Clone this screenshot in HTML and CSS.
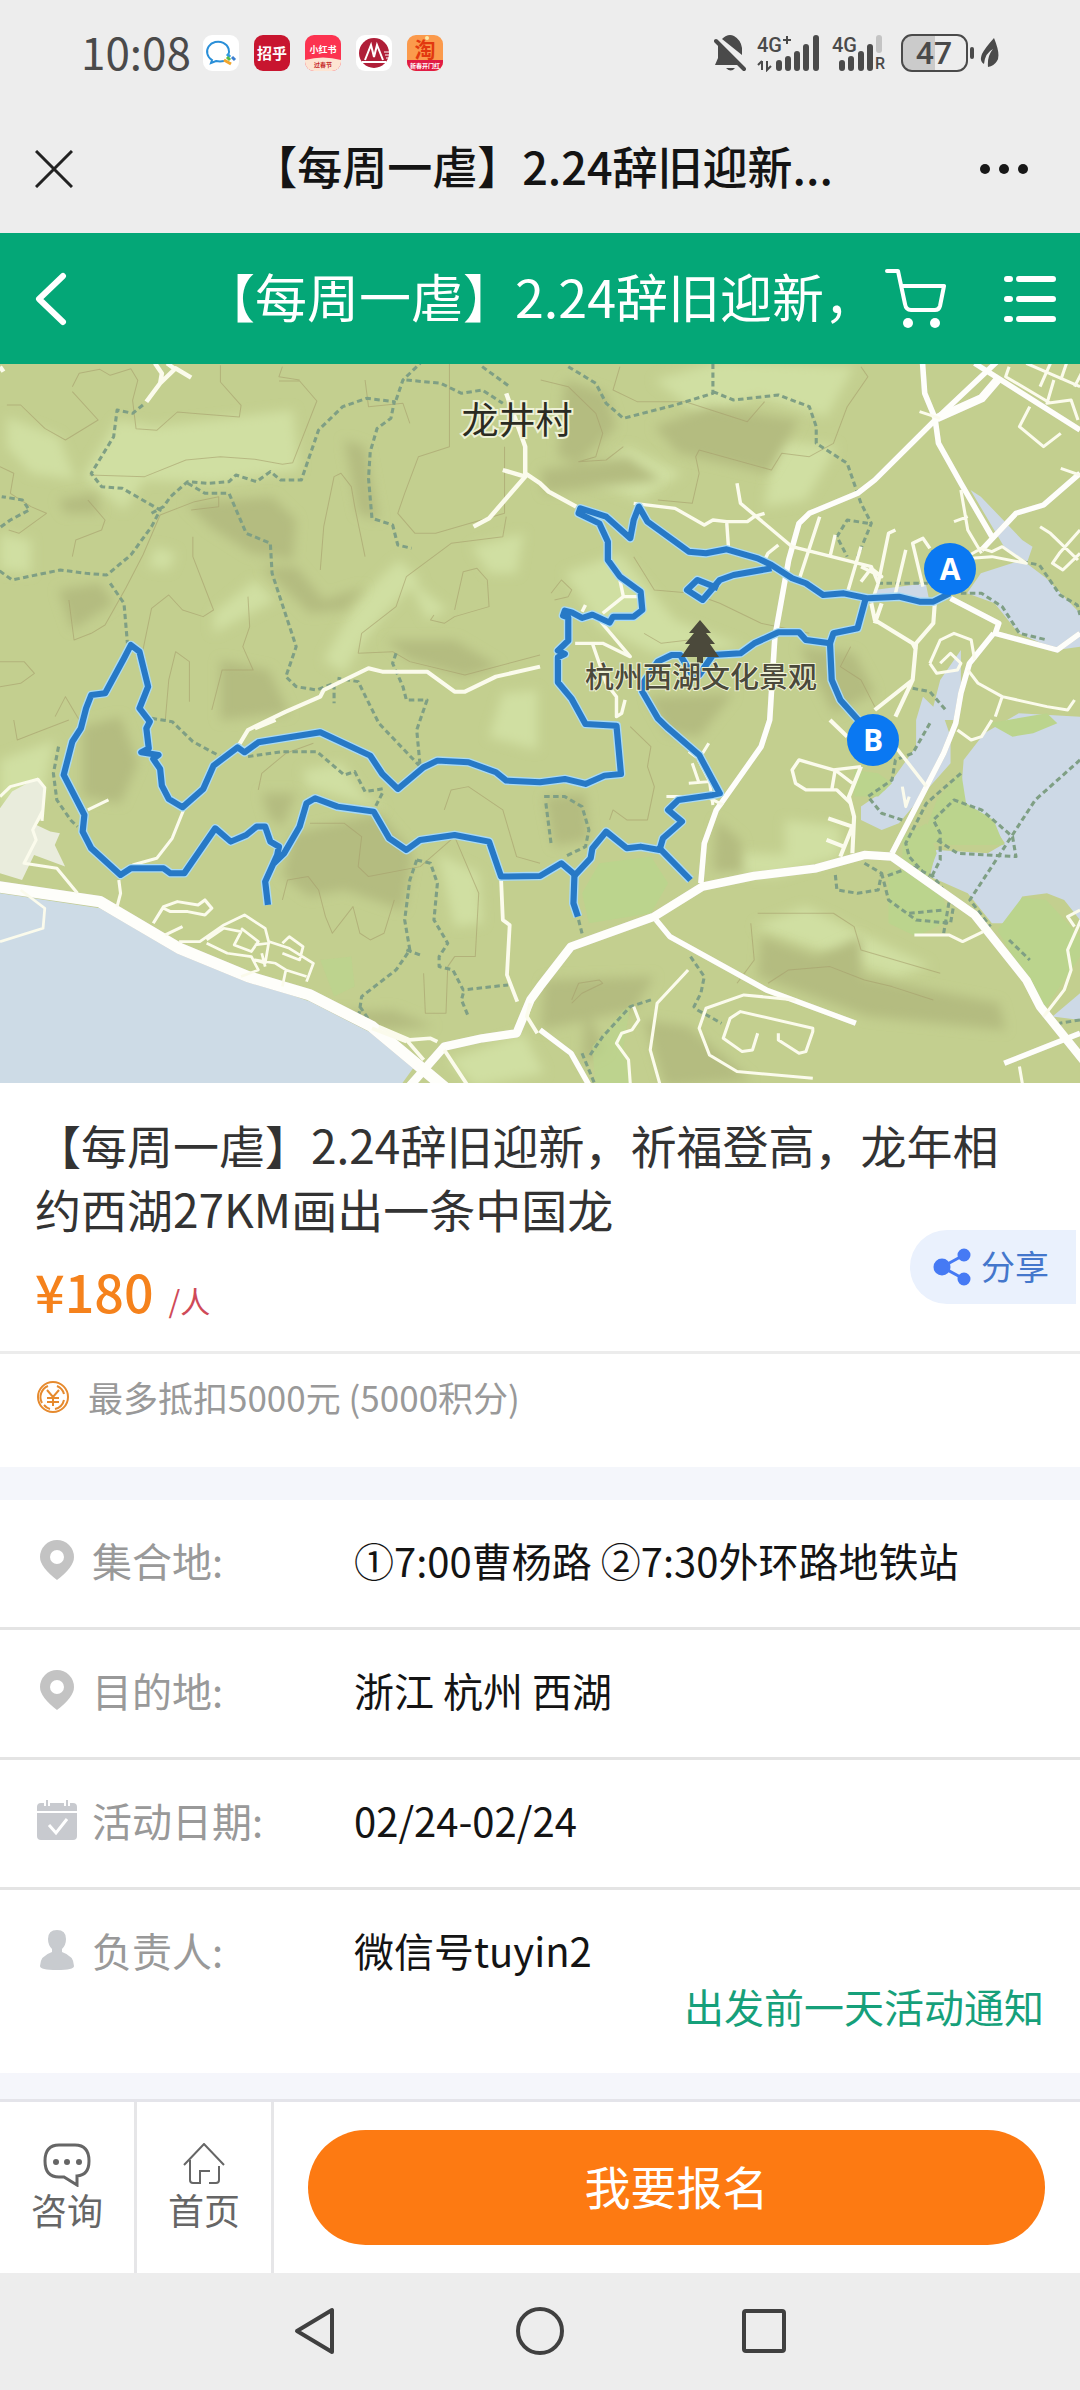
FILE: index.html
```html
<!DOCTYPE html>
<html lang="zh-CN">
<head>
  <meta charset="UTF-8">
  <meta name="viewport" content="width=device-width, initial-scale=1">
  <title>【每周一虐】2.24辞旧迎新</title>
  <link rel="stylesheet" href="styles.css">
</head>
<body>

  <div class="status-bar">
    <span class="clock">10:08</span>
    <div class="apps">
      <svg width="36" height="36" viewBox="0 0 36 36">
        <rect width="36" height="36" rx="9" fill="#fff"/>
        <path d="M25 21A11 10 0 1 0 9 25l-1 3 5-2a14 11 0 0 0 8 0" fill="none" stroke="#2a8fd8" stroke-width="2"/>
        <path d="M24 19l3 3" stroke="#2f9be0" stroke-width="3"/>
        <path d="M29 22l3 3" stroke="#3b7fd0" stroke-width="3"/>
        <path d="M27 25l-3-3" stroke="#58b947" stroke-width="3"/>
        <path d="M21 25l7 4" stroke="#f2a52b" stroke-width="3"/>
      </svg>
      <svg width="36" height="36" viewBox="0 0 36 36">
        <rect width="36" height="36" rx="9" fill="#c8152f"/>
        <text class="app-text" x="18" y="24" font-size="15" fill="#fff">招乎</text>
      </svg>
      <svg width="36" height="36" viewBox="0 0 36 36">
        <rect width="36" height="36" rx="9" fill="#fc3350"/>
        <path d="M0 25q18-5 36 0v2a9 9 0 0 1-9 9H9a9 9 0 0 1-9-9z" fill="#fde4d2"/>
        <text class="app-text" x="18" y="18" font-size="9" fill="#fff">小红书</text>
        <text class="app-text" x="18" y="32" font-size="6" fill="#c62a2a">过春节</text>
      </svg>
      <svg width="36" height="36" viewBox="0 0 36 36">
        <rect width="36" height="36" rx="9" fill="#fff"/>
        <circle cx="18" cy="18" r="15" fill="#b01e38"/>
        <path d="M9 25l6-15 3 12 3-12 6 15M6 27h24" fill="none" stroke="#fff" stroke-width="2"/>
        <path d="M28 17h6M29 20h5M30 23h3" stroke="#fff" stroke-width="1"/>
      </svg>
      <svg width="36" height="36" viewBox="0 0 36 36">
        <rect width="36" height="36" rx="9" fill="#fb9a4c"/>
        <path d="M0 25h36v2a9 9 0 0 1-9 9H9a9 9 0 0 1-9-9z" fill="#e11b44"/>
        <circle cx="20" cy="3" r="2" fill="#fde9a8"/>
        <text class="app-text" x="18" y="22" font-size="21" fill="#e2380f">淘</text>
        <text class="app-text" x="18" y="33" font-size="6" fill="#fff">新春开门红</text>
      </svg>
    </div>
    <div class="signals">
      <svg width="32" height="38" viewBox="0 0 32 38" fill="#4a4a4a">
        <path d="M8 5Q14-1 20 2q7 4 8 12v7zM4 9l22 22H1l3-7zM12 34h9q-4 5-9 0z"/>
        <path d="M2 7l28 28" stroke="#4a4a4a" stroke-width="4" stroke-linecap="round"/>
      </svg>
      <svg width="64" height="38" viewBox="0 0 64 38">
        <text class="signal-text" x="0" y="18" font-size="20">4G</text>
        <path d="M30 2v8M26 6h8M5 27v9M1 31l4-4M10 27v9l4-4" fill="none" stroke="#4a4a4a" stroke-width="2"/>
        <path d="M22 29v5M31 25v9M40 20v14M49 13v21M59 4v30" stroke="#4a4a4a" stroke-width="6" stroke-linecap="round"/>
      </svg>
      <svg width="58" height="38" viewBox="0 0 58 38">
        <text class="signal-text" x="0" y="18" font-size="20">4G</text>
        <path d="M10 29v5M19 25v9M29 20v14M38 13v21" stroke="#4a4a4a" stroke-width="6" stroke-linecap="round"/>
        <path d="M47 4v12" stroke="#c4c4c4" stroke-width="6" stroke-linecap="round"/>
        <text class="signal-text" x="43" y="35" font-size="16">R</text>
      </svg>
      <svg width="76" height="38" viewBox="0 0 76 38">
        <path d="M10 2h24v34H10a8 8 0 0 1-8-8V10a8 8 0 0 1 8-8z" fill="#cbcbcb"/>
        <rect x="1" y="1" width="65" height="36" rx="10" fill="none" stroke="#4a4a4a" stroke-width="2"/>
        <path d="M71 15v8" stroke="#4a4a4a" stroke-width="4" stroke-linecap="round"/>
        <text class="signal-text" x="33" y="30" font-size="32" text-anchor="middle">47</text>
      </svg>
      <svg width="20" height="32" viewBox="0 0 20 32" fill="#4a4a4a">
        <path d="M14 1q7 17 3 23-3 5-9 6Q7 19 13 12 5 16 4 27-1 24 2 17 5 11 14 1z"/>
      </svg>
    </div>
  </div>

  <div class="window-bar">
    <button class="icon-btn" aria-label="关闭">
      <svg width="38" height="38" viewBox="0 0 38 38" stroke="#222" stroke-width="3"><path d="M1 1l36 36M37 1L1 37"/></svg>
    </button>
    <div class="window-title">【每周一虐】2.24辞旧迎新...</div>
    <button class="icon-btn" aria-label="更多">
      <svg width="48" height="12" viewBox="0 0 48 12" fill="#181818"><circle cx="5" cy="6" r="5"/><circle cx="24" cy="6" r="5"/><circle cx="43" cy="6" r="5"/></svg>
    </button>
  </div>

  <header class="page-header">
    <button class="icon-btn back" aria-label="返回">
      <svg width="32" height="54" viewBox="0 0 32 54" fill="none" stroke="#fff" stroke-width="6" stroke-linecap="round" stroke-linejoin="round"><path d="M28 4L4 27l24 23"/></svg>
    </button>
    <div class="page-title">【每周一虐】2.24辞旧迎新，</div>
    <button class="icon-btn cart" aria-label="购物车">
      <svg width="62" height="62" viewBox="0 0 62 62" fill="none" stroke="#fff" stroke-width="4" stroke-linecap="round" stroke-linejoin="round">
        <path d="M3 3h11l7 33q1 6 6 6h24q4 0 5-4l4-20H18"/>
        <circle cx="24" cy="55" r="5" fill="#fff" stroke="none"/><circle cx="51" cy="55" r="5" fill="#fff" stroke="none"/>
      </svg>
    </button>
    <button class="icon-btn" aria-label="菜单">
      <svg width="52" height="48" viewBox="0 0 52 48" stroke="#fff" stroke-width="6" stroke-linecap="round"><path d="M3 4h3M15 4h34M3 24h3M15 24h34M3 44h3M15 44h34"/></svg>
    </button>
  </header>

  <svg class="map" viewBox="0 0 1080 719" role="img" aria-label="徒步路线图">
    <defs>
      <filter id="soft" x="-10%" y="-10%" width="120%" height="120%"><feGaussianBlur stdDeviation="16"/></filter>
      <g id="track">
        <path d="M2758 700l-48 25-40 0-60-15-90 5-70-15-60 5-50-35-40-15-60-40-40-20-90-27-60 12-50-5-60-45-60-45-25-45-15 40-10 55-70-65-75-25-5 15 60 30 25 55 0 55 35 50 60 45 5 55-25 20-60 0-10 18-50-24-30 10-30-17-20-5-5 15 15 5 0 70-30 30 20 10-20 10 0 75 40 50 40 75 90 5 13 145-48 5-55 25-60-15-72 10-98-5-30-25-80-30-90-5-40 20-75 65-45-45-35-55-145-70-180 30-40 30-20-15-70 55-30 70-60 55-40-25-20-40-5-50-20-30 15-12-50-8 22-12-7-60 10-20-30-40 25-65-25-105-25-20-20 40-55 105-40 5-15 40-15 60-25 40-25 100 60 120-5 50 25 50 85 80 30-20 95 0 20 15 40 0 30-45 60-90 45 40 45-20 30-25 25 0 15 45 25 15-5 25-35 80 8 70"/>
        <path d="M795 1510l30-30 45-80 20-70 25-15 65 25 105 15 45 80 50 35 40-30 100-15 100 20 35 105 113-2 62-38 40 35 45-50 5-30 40-50 60 50 40-5 55 10 10-35 55-50-40-35 30-30 100-15 20-5-60-115-90-80-30-30-45-80 5-30 40-60 40-20 25 0 35 60 20 0 40-60 80-5 40-30 70-33 60 0 20 23 70 10 10-30 70-15 25-95"/>
        <path d="M1668 1545l-3 85 13 40M1915 1465l90 95M2410 850l5 110 25 60 65 75M2240 625l-110 20-40 15-50 60-45-30 30-30 60 25"/>
      </g>
      <g id="roads">
        <path class="w3" d="M-20 1578l310 47 90 55 140 85 200 85 180 55 180 95 220 190"/>
        <path class="w2" d="M1180 2190l110-130 110-25 100-15 40-100 28-40 90-120 242-90 140-90 150-32 180-23 140-40 80 5 240 175 150 195 40 80 156 200M2720 175l130-60 50-60"/>
        <path class="w1" d="M2678 0l7 100 30 75 10 75 65 120 90 160M2900 0l-180 175-180 185-50 40-140 60-30 30-30 110-40 230-15 250-25 80-130 190-35 100-10 120M2850 570l100-110 80-25 106-95M2830 10l306 200M2760 715l140 75-10 30 180 50 66-50M2885 820l-70 90-25 90-15 90-35 90-150 300M1568 2010l90 70 60 110M1905 1680l40 50 280 160 260 100M3136 2020l-220 90"/>
      </g>
    </defs>
    <rect width="1080" height="719" fill="#c3cf8f"/>
    <g transform="translate(0 -4) scale(.3444 .3333)" fill="none" stroke-linejoin="round">
      <!-- hills -->
      <g filter="url(#soft)" fill="#d0dfa2">
        <path d="M340 180l110 20 400-50 20 180-250 40-200-10-60 90-120-100z"/>
        <path d="M20 170l150 60 50 130-130-20-70-80zM0 520l90 20 0 100-90-10zM620 760l120-100 60 60-180 100z"/>
        <path d="M940 900q100-200 220-300l60 60q-140 120-220 280zM1370 560l150-40-20 120-80 0zM1180 650l120 100-60 30z"/>
        <path d="M880 1230l110-20 60 90 70 50-230-70zM1270 1480l120 60 10 150-80 10zM450 560l60 20-20 50-60-10z"/>
        <path d="M1900 60l200-60 380 20-80 150-200-60-160 60zM1640 640l160-60 160 200 200 80-260 20-160-80z"/>
        <path d="M2250 240l180 20-90 160-120 20zM1820 260l160 80-120 80-160-60zM2190 1700l150-60 360 180-100 30-380-140zM2060 1540l100-60 280 10-190 60z"/>
        <path d="M2280 1380l160 20 0 90-160 0zM0 1200l160-60-40 180-120 30zM1460 1000l100-10 0 180-140-40zM1300 2100l220-80 60 120-200 40z"/>
      </g>
      <g filter="url(#soft)" fill="#b4bc80">
        <path d="M540 430l250-20 70 70-10 120-120-20-120-80zM1000 240l60 20 40 220-60-20zM760 620l100 0 80 100 120-40-60 70-100 10z"/>
        <path d="M640 900l140 30 60 130-200 20zM240 1100l110-30 50 140-50 120-110-20z"/>
        <path d="M850 1420l250-60 100 120-30 170-170-60-100 20-80-60zM760 1300l100 0-40 100-40-30z"/>
        <path d="M170 420l110-20 10 60-100 0zM170 690l120-20 40 60-120 80z"/>
        <path d="M1640 60l120 40 30 100-110 110-60-20zM1900 200l160-60 260 40-90 160-260-60zM1570 330l250-40 100 70-340 40z"/>
        <path d="M1880 1010l250-10-100 130-90-10zM1580 1310l120-10 10 140-100 20zM2080 1380l70 60 10 100-90 0z"/>
        <path d="M2210 1730l160 60 130-60 0 120 400 80 20 80-400-40-320-120zM1580 1860l320-10-60 100-270 60z"/>
        <path d="M2320 860l160 20 60 120-120 60zM940 1960l200-10 120 50-150 10zM1700 1950l60 120-70 40z"/>
        <path d="M2000 2000l180 160-250 20-60-200zM1120 840l200 0 130 80-100 30-160-50z"/>
      </g>
      <!-- contours -->
      <g stroke="#a79f6d" stroke-width="3" opacity=".6">
        <path d="M210 80l20-40 60-12 30 18 60-20 20 35-15 60 10 85 60 5 60-55 60 5 120 10 5-35-60-70 0-50M20 135l40 0 70 70 60 35 95-60-75-85"/>
        <path d="M260 345l160 5 120-50 100-10 100 8 80 15 30-5 70-185-50-60-60 0M820 20l-10 30 60 10M0 320l40 20-10 60 60 40 45 20-80 60-30-10"/>
        <path d="M210 590l10-50 75-30 10-30-50-60M200 720l15 120 50-20 40-25 60-110 50-100 50-120 100-40 70-15 0 30-80 10"/>
        <path d="M560 530l0 60 60 160-30 20-60-20-40-45-50 40-30 150M720 710l5 90-20 60 30 70-90 0-30 120M480 1080l10-120 20-85 40 30 0 120"/>
        <path d="M930 630l10-130 30-150 20-10 30 40 10 60 30 150M1060 60l10 80 100-10 20 60M1305 10l0 250-90 30-40 110-20 60 50 60 60 0 200-60 0-200M1320 750l25-115 40-10 30 35 5 80-100 30-30 20-40-10 10-15M1040 880l10-60 100-80 30-90 130-100 150-20 10-60M1040 880l100-5 50 30 160 40 218-60"/>
        <path d="M1800 20l-20 70 70 35 140 0 180 60 50-60M2500 20l20 30-60 90-40 110-70 40-80-10-30 50-210-60-10 20 10 50-20 90-100-10M1570 60l80 20 80 80 20 60-20 70-50 15 80-5 50-40"/>
        <path d="M1840 590l60 100 110 10 80 30 120 60 140 30M2470 860l-30 60 60 40 40 80M1600 700l30-40 30 30-10 20-40 10M1870 820l50 30 80-10"/>
        <path d="M750 1290l10-50 70-60 80-30M900 1390l100 0 50 40-10 90 30 30 150-30 100-90 70 170-10 190-60 0-20 30-5 140-60 0-5-120M820 1620l15-60 60-10 30 40 20 80 20 50 60-80 20 80 30 20 40-20 30-100"/>
        <path d="M1290 1350l20-60 50-10 100 70 40 140 68 20M1830 1100l60 60-10 60 20 60-20 100-60 0-40-30-10 30M2200 1660l220 0 60 40 20 70 230 70M2180 1690l10 110-50 70M2230 1870l60-40 120-10 100 40 80 20 120 40M1660 1920l20-50 60-10 10 10-60 30-30 30"/>
        <path d="M0 980l60-10 40-30-30-35-70 0M40 1080l10 60 50-20 100-40M230 1080l-40-70-30 60"/>
      </g>
      <!-- water and parks -->
      <path d="M0 1345l35-50 75-42 22 32-8 85-18 25 40 20 28 5-15 35 30 65-90-35-35 75-64-20z" fill="#e9ecdc"/>
      <path d="M0 1600l290 45 230 130 200 85 180 65 180 95 130 90-70 100H0z" fill="#cddbe6"/>
      <g fill="#cdd9e6">
        <path d="M2848 640l120-40 70 55 98 105v100l-68 10-110-50-70-90-80-30zM2538 690l150-20 10 50-160 0zM2818 390l30 20 120 130 30 20-15 45-65-40z"/>
        <path d="M2798 1200l60-80 100-60 178 10v610l-46-60-50-20-72 10-38 80-50 0-70-90-110-50 18-80 150 10 50-30-40-60-90-60zM2500 1340l70-50 90-130 0-80 20-70 60 60 20 60 0 80-60 70-90 110-50 20-60-30zM3136 1900l-80 70 80 10zM2700 1080l30-120 60-90 0 130-10 80z"/>
      </g>
      <g fill="#bbd48d">
        <path d="M2968 1612l70 8 98 110v60l-110 170-40-90-90-160zM2720 1320l70-90 15 100 80 50 30 75-150 0-90-10zM2480 1230l70 10 40 30-40 40-70 0zM1740 1510l150-20 50 80-50 90-180 30-20-90zM2580 1530l60 0 90 60 30 90-100 50-80-40zM2620 1430l70-40 30 90-30 80-70-60zM2870 1090l70 40 60-10 70-30-30-30z"/>
        <path d="M1720 2060l90-110 20-10-20 120 30 130-110 0zM930 1800l90-10 10 90-60 30z" opacity=".7"/>
      </g>
      <!-- footpaths -->
      <g stroke="#7f9f84" stroke-width="9" stroke-dasharray="16 10">
        <path d="M415 135l-30 25-45-10-10 80-65 110 30 40 60 5 110 65-25 50-60 85-70 60-60-5-75-10-140 30-40-30-5-120 40-30 55-30-20-30-60-10"/>
        <path d="M440 460l35-20 20-30 50-45 60 5 60-5 20-20 60 20 40-30 30 25 60 0 50-150 70-70 70-25 80 10-10 50-40 30-20 70-5 80 10 120 60 20 15 60 40 10"/>
        <path d="M545 370l50 30 70 0 50 120 70 30 5 90 70 220-30 90 30 30 60 10 50-20 0 60M320 670l40 60 10 120M1150 120l20-60 50-50M1180 60l100 10 60 30 60-10 60 40M1400 20l40 30 40 30M440 1075l60 10 60 60 90 50M1150 880l-10 30 30 70 10 40 60 0-30 90 10 110-120-130-60-125-60-10"/>
        <path d="M1650 20l80 50 30 60 50 45 150-40 110-35 0-90M2070 95l60 25 130-15 90 35 20 60 0 50 90 60 40 120 30 60-40 100M2520 490l-60-10-30 50 30 60M2548 670l160 0M2790 700l60 0 60 40 50 80 80 20M2968 605l50 10 60 90 50 30 8 30M2650 985l50 10 50 60"/>
        <path d="M170 1160l-15 80 10 80 40 60 20 20M720 1190l100-15 100 0 80 70 30-10 30 60 60-10M1110 1300l-20 40M1210 1500l40 10 20 60-10 110 40 70-25 40 0 30 40 10 30 60 130-15M1345 1900l-5 20 20 50M1210 1500l-20 60-15 120 15 90-40 60-100 80-10 70M1180 1770l40 15M1045 1940l40 60"/>
        <path d="M1580 1310l60 0 50 30 20 70-10 50-60 30M1585 1330l15 120M1680 1680l10 40M2005 1790l40 60-10 50-20 40 10 10 70 40M1890 1920l-60 20-80 90-40 60M1690 2080l40 100"/>
        <path d="M3136 1200l-130 120-120 190-70 110 60 80M2700 1090l-50 90-50 20-10 60-70 50 40 50 60 20M2790 1240l-100 90-60 120 10 40 60 70 30-60 0-80-20-40 60-60 80 30 90 80 10 60-170-10-60-40M2510 1510l50 30-10 50-60 10-60-10-5-50M2560 1540l20 80 80 60 100 10 10-60-60-80-60-30-80 30M2740 1720l20-120M2640 1660l100-10M2930 1740l60 60M3136 1980l-60 10"/>
      </g>
      <!-- main roads, casing under the white line -->
      <use href="#roads" class="road-casing"/>
      <use href="#roads" class="road"/>
      <g stroke="#fbfbec" stroke-width="9">
        <path d="M450 10l20 30-5 30-40 55M465 70l45-45 45 28M505 25l-20-15M0 20l10 15M1470 100l55 160 0 80 43 30 25 25 80 45M1460 330l65 20-105 125-45 25" stroke-width="13"/>
        <path d="M1568 920l-128 30-90 45-30 0-80-60-130 0-40-10-130 65-10 20-100 45-110 55-35 60M800 1080l-60 25" stroke-width="12"/>
        <path d="M1840 430l120 15 85 50 25-15 40 5 5 75M2110 485l60 0 20-15 30-10M2140 370l10 60 150 130 230 60 20 50-20 60M2220 600l10-20 30-25M2380 470l-60 190M2410 590l15-65M2500 560l-40 140M2600 510l-20 10-30 150M2630 570l-30 130M2680 680l-30-130 30-15 20 30M2500 620l60 30-30-25-30 40" stroke-width="10"/>
        <path d="M1800 660l10 50 50 0M1810 710l-60 50M1740 780l90 110-80-40-30 0 40 120 30 40 0 60 15-10 10-40M1750 850l-80 0M1700 735l-10 20" stroke-width="10"/>
        <path d="M2530 730l10 50 110 70 10 20M2540 790l20-60M2715 720l-5 70-50 60-10 110-110 90M2650 960l-50 110M2410 1080l50 50M2500 1220l-35 90 15 60-5 110M2440 1490l35-90-70-25M2400 1440l50 20" stroke-width="12"/>
        <path d="M2500 1220l-80 10-100-30-20 30 10 40 30 20 90 0 40 40M2425 1230l-10 60M2425 1230l50 40M2600 1160l90 120" stroke-width="10"/>
        <path d="M2700 910l30-70 40-20 50 20 10 60M2700 910l20 30 60-10 10-20-30-30-30 30M2810 930l30 40 70 40-20 60M2910 1010l130 30 60 10 20-30M2780 1110l40 30 30-10 30-50M2640 1310l-10 30-10-60" stroke-width="9"/>
        <path d="M2790 390l20 120 40 70M2770 485l40-15M2790 600l60-35 30 10 30-15 70 50-100-20-60 5M3020 500l30 20 80 80M3136 510l-60 70-20 30 30 20 50-50M3080 325l56 20M2930 20l-10 30 130 80M2980 10l156 70M2990 140l-30 60 70 60 50-40M3020 80l30-70M3080 60l20-60M3120 80l20-40M3060 60l-20 70 70-10 20 60M2670 155l60 20" stroke-width="9"/>
        <path d="M125 1350l-30 60 10 30-35 70 95 15 60 75M345 1560l5 40-10 40M385 1515l70-20 45-60 35-90M255 1350l60-30M445 1690l30-50 40-15 60 10 20-15 20 25-20 20-50-10-50 0-20-10M480 1725l50-25M0 1310l30-30 80-22 20 25-8 100"/>
        <path d="M520 1745l60 0 70-50 60-30 60 40 10 40 60 20 70 45-20 55M600 1740l50-35 50 10-20 40 50 20 20-30-50-40M600 1750l60 30 70 10 20 40-50 20M740 1755l40-5-10 60-30-10 60 10 30 20-10 50M760 1780l10 40M820 1750l20-20 40 30-10 40-50-20M830 1830l60 20M60 1590l70 55-5 60-125 40" stroke-width="8"/>
        <path d="M1455 1560l5 120 20 15-8 150 30 80M1100 2000l90 40 60-5 20 10M1180 2040l50 60M1290 2070l70 110M1540 1930l-10 40 30 50M1080 2005l100 40" stroke-width="11"/>
        <path d="M2058 1150l-30 50 30 60M2050 1310l50 25M2000 1175l40 30 20 60 10 70M2000 1270l60-5M1935 1310l50 0M2010 1210l20 60" stroke-width="9"/>
        <path d="M1998 1830l-90 100-20 140 30 110M1840 1940l15 40-20 30-30 10-15 30 35 50 5 70 40 10M2310 1920l-150-15-110 40-20 60 30 80 80 50 220 20M2200 2020l-15 50-30 5-55-40 20-60 30-20 210 50 0 10-20 60-20 5-60-40 0-20M2655 1725l100 0 40 20 60-30M3030 1970l60-80 20-60-10-60 30-70 8-20M3120 1700l-20-30 36-20M2960 2120l10 60" stroke-width="9"/>
      </g>
      <use href="#track" class="track-halo"/>
      <use href="#track" class="track-line"/>
    </g>
    <g fill="#4b493b">
      <path d="M700 256l11 13h-5l9 11h-5l9 13h-16v6h-6v-6h-16l9-13h-5l9-11h-5z"/>
      <text class="map-label park" x="701" y="324" font-size="29">杭州西湖文化景观</text>
      <text class="map-label" x="517" y="70" font-size="37" fill="#2b2b22">龙井村</text>
    </g>
    <circle cx="950" cy="205" r="26" fill="#0a78f2"/>
    <circle cx="873" cy="376" r="26" fill="#0a78f2"/>
    <text class="marker" x="950" y="216">A</text>
    <text class="marker" x="873" y="387">B</text>
  </svg>

  <section class="intro">
    <h1>【每周一虐】2.24辞旧迎新，祈福登高，龙年相约西湖27KM画出一条中国龙</h1>
    <p class="price">¥180 <small>/人</small></p>
    <button class="share">
      <svg width="38" height="40" viewBox="0 0 38 40" fill="#467af4" stroke="#467af4" stroke-width="3">
        <path d="M9 20L31 8M9 20l22 12"/>
        <circle cx="9" cy="20" r="7"/><circle cx="31" cy="8" r="5"/><circle cx="31" cy="32" r="5"/>
      </svg>
      <span>分享</span>
    </button>
  </section>

  <section class="points">
    <svg width="34" height="34" viewBox="0 0 34 34" fill="none" stroke="#e68a2e" stroke-width="2">
      <circle cx="17" cy="17" r="15"/>
      <path d="M12 6a12 12 0 0 0-6 17M8 25a12 12 0 0 0 6 4M21 6a12 12 0 0 1 7 8M28 20a12 12 0 0 1-9 9M11 10l6 7 6-7M17 17v9M11 18h12M11 22h12"/>
    </svg>
    <span>最多抵扣5000元 (5000积分)</span>
  </section>

  <section class="details">
    <div class="row">
      <svg width="42" height="42" viewBox="0 0 42 42"><path d="M21 41Q4 28 4 18a17 17 0 0 1 34 0q0 10-17 23zM21 11a7 7 0 1 0 0 14 7 7 0 0 0 0-14z" fill="#c3c3c3" fill-rule="evenodd"/></svg>
      <span class="label">集合地:</span>
      <span class="value">①7:00曹杨路 ②7:30外环路地铁站</span>
    </div>
    <div class="row">
      <svg width="42" height="42" viewBox="0 0 42 42"><path d="M21 41Q4 28 4 18a17 17 0 0 1 34 0q0 10-17 23zM21 11a7 7 0 1 0 0 14 7 7 0 0 0 0-14z" fill="#c3c3c3" fill-rule="evenodd"/></svg>
      <span class="label">目的地:</span>
      <span class="value">浙江 杭州 西湖</span>
    </div>
    <div class="row">
      <svg width="42" height="42" viewBox="0 0 42 42">
        <path d="M5 4h32q4 0 4 4v4H1V8q0-4 4-4zM1 14h40v23q0 4-4 4H5q-4 0-4-4z" fill="#c8cacf"/>
        <path d="M11 2v5M31 2v5" stroke="#fff" stroke-width="6"/>
        <path d="M11 1v6M31 1v6" stroke="#c8cacf" stroke-width="2"/>
        <path d="M13 26l7 8 11-14" fill="none" stroke="#fff" stroke-width="3"/>
      </svg>
      <span class="label">活动日期:</span>
      <span class="value">02/24-02/24</span>
    </div>
    <div class="row">
      <svg width="42" height="42" viewBox="0 0 42 42"><path d="M21 1q9 0 9 9 0 6-4 10v3q12 4 12 14 0 4-17 4T4 37q0-10 12-14v-3q-4-4-4-10 0-9 9-9z" fill="#c8cbcf"/></svg>
      <span class="label">负责人:</span>
      <span class="value">微信号tuyin2</span>
    </div>
    <a class="notice" href="#">出发前一天活动通知</a>
  </section>

  <div class="band"></div>

  <footer class="action-bar">
    <a class="tab" href="#">
      <svg width="48" height="44" viewBox="0 0 48 44" fill="none" stroke="#666" stroke-width="3">
        <path d="M16 2h16q14 0 14 16 0 14-12 15v9l-13-8h-5Q2 34 2 18 2 2 16 2z"/>
        <g fill="#666" stroke="none"><circle cx="13" cy="19" r="3"/><circle cx="24" cy="19" r="3"/><circle cx="36" cy="19" r="3"/></g>
      </svg>
      咨询
    </a>
    <a class="tab" href="#">
      <svg width="42" height="44" viewBox="0 0 42 44" fill="none" stroke="#666" stroke-width="2">
        <path d="M1 22L21 1l20 21M7 17v20q0 3 3 3h7V28h10M36 23v14q0 3-3 3h-7"/>
      </svg>
      首页
    </a>
    <button class="signup">我要报名</button>
  </footer>

  <nav class="system-nav">
    <button class="icon-btn" aria-label="返回"><svg width="48" height="48" viewBox="0 0 48 48"><path d="M40 3v42L5 24z"/></svg></button>
    <button class="icon-btn" aria-label="主屏幕"><svg width="48" height="48" viewBox="0 0 48 48"><circle cx="24" cy="24" r="22"/></svg></button>
    <button class="icon-btn" aria-label="最近任务"><svg width="48" height="48" viewBox="0 0 48 48"><rect x="4" y="4" width="40" height="40" rx="2"/></svg></button>
  </nav>

</body>
</html>
```
FILE: styles.css
```css
* {
  box-sizing: border-box;
}

body {
  margin: 0;
  font-family: "Noto Sans CJK SC", sans-serif;
  background-color: #fff;
  color: #141414;
}

button {
  border: 0;
  padding: 0;
  background: none;
  font-family: inherit;
  cursor: pointer;
}

a {
  text-decoration: none;
}

svg {
  display: block;
  flex-shrink: 0;
}

.icon-btn {
  display: flex;
  align-items: center;
}

/* phone status bar */
.status-bar {
  display: flex;
  align-items: center;
  height: 105px;
  padding: 0 80px 0 81px;
  background-color: #ededed;
}

.clock {
  padding-bottom: 3px;
  font-size: 44px;
  line-height: 60px;
  color: #4a4a4a;
}

.apps {
  display: flex;
  gap: 15px;
  margin-left: 12px;
}

.app-text {
  font-weight: bold;
  text-anchor: middle;
}

.signals {
  display: flex;
  align-items: center;
  gap: 11px;
  margin-left: auto;
}

.signals svg:last-child {
  margin-left: -8px;
}

.signal-text {
  font-family: Roboto, sans-serif;
  font-weight: 500;
  fill: #4a4a4a;
}

/* title bars */
.window-bar {
  display: flex;
  align-items: center;
  justify-content: space-between;
  height: 128px;
  padding: 0 52px 0 35px;
  background-color: #ededed;
}

.window-title {
  margin-left: 32px;
  padding-bottom: 6px;
  font-size: 45px;
  font-weight: 500;
  line-height: 64px;
}

.page-header {
  display: flex;
  align-items: center;
  height: 131px;
  padding: 0 24px 0 35px;
  background-color: #04a777;
}

.page-title {
  flex: 1;
  margin-left: 136px;
  padding-bottom: 6px;
  overflow: hidden;
  white-space: nowrap;
  font-size: 52px;
  line-height: 76px;
  color: #fff;
}

.cart {
  margin-right: 58px;
}

/* route map */
.map {
  width: 100%;
  height: auto;
}

.road-casing {
  stroke: #c9c6ba;
}

.road-casing .w1,
.w1 {
  stroke-width: 16px;
}

.w2 {
  stroke-width: 25px;
}

.w3 {
  stroke-width: 34px;
}

.road {
  stroke: #fefefa;
}

.track-halo {
  stroke: #a8daf6;
  stroke-width: 26px;
}

.track-line {
  stroke: #2779c6;
  stroke-width: 18px;
}

.map-label {
  text-anchor: middle;
  paint-order: stroke;
  stroke: #eef1d6;
  stroke-width: 4px;
}

.park {
  font-weight: 500;
  stroke-width: 2px;
}

.marker {
  font-family: "Open Sans", sans-serif;
  font-size: 30px;
  font-weight: bold;
  text-anchor: middle;
  fill: #fff;
}

/* title and price */
.intro {
  position: relative;
  padding: 29px 48px 22px 35px;
  border-bottom: 3px solid #ececec;
}

.intro h1 {
  margin: 0;
  font-size: 46px;
  font-weight: normal;
  line-height: 64px;
  color: #333;
}

.price {
  display: flex;
  align-items: baseline;
  gap: 15px;
  height: 76px;
  margin: 13px 0 0;
  font-size: 52px;
  font-weight: 500;
  line-height: 76px;
  color: #f5821c;
}

.price small {
  font-size: 30px;
  font-weight: normal;
  color: #cf4a58;
}

.share {
  position: absolute;
  right: 4px;
  bottom: 47px;
  display: flex;
  align-items: center;
  gap: 10px;
  height: 74px;
  padding: 0 27px 0 23px;
  border-radius: 37px 0 0 37px;
  background-color: #eaf1fd;
  font-size: 34px;
  line-height: 48px;
  color: #4477cc;
}

.share span {
  padding-bottom: 3px;
}

.points {
  display: flex;
  align-items: center;
  gap: 18px;
  padding: 17px 36px 44px;
  font-size: 35px;
  line-height: 52px;
  color: #999;
}

/* details */
.details {
  border-top: 33px solid #f4f6fb;
  padding-bottom: 41px;
}

.row {
  display: flex;
  align-items: center;
  padding: 30px 36px 37px;
  border-bottom: 3px solid #e4e4e4;
  font-size: 40px;
  line-height: 60px;
}

.row:nth-last-child(2) {
  padding-bottom: 0;
  border-bottom: 0;
}

.label {
  width: 262px;
  margin-left: 14px;
  color: #999;
}

.notice {
  display: block;
  margin-right: 36px;
  font-size: 40px;
  line-height: 52px;
  text-align: right;
  color: #16a07a;
}

.band {
  height: 26px;
  background-color: #f5f6fb;
}

/* bottom bar */
.action-bar {
  display: flex;
  align-items: center;
  border-top: 3px solid #e4e4ea;
}

.tab {
  display: flex;
  flex-direction: column;
  align-items: center;
  width: 137px;
  height: 171px;
  padding-top: 41px;
  border-right: 3px solid #e6e6e8;
  font-size: 36px;
  line-height: 44px;
  color: #666;
}

.signup {
  flex: 1;
  height: 115px;
  margin: 0 35px 0 34px;
  padding-bottom: 5px;
  border-radius: 58px;
  background-color: #fd7a12;
  font-size: 46px;
  color: #fff;
}

.system-nav {
  display: flex;
  justify-content: center;
  gap: 176px;
  padding: 34px 0 35px;
  background-color: #ededed;
}

.system-nav path,
.system-nav circle,
.system-nav rect {
  fill: none;
  stroke: #404040;
  stroke-width: 4px;
  stroke-linejoin: round;
}
```
